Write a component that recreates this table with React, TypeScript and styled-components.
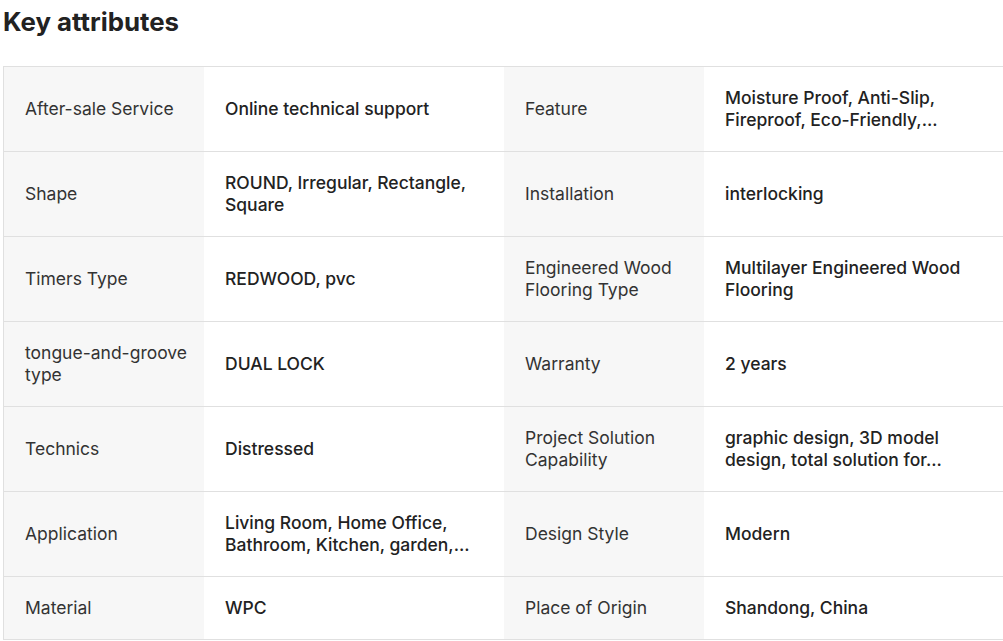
import React from "react";
import styled, { createGlobalStyle } from "styled-components";

const Global = createGlobalStyle`
  html, body { margin: 0; padding: 0; background: #fff; overflow: hidden; }
  body { font-family: Inter, "Noto Sans", "Liberation Sans", sans-serif; }
`;

const Page = styled.div`
  padding: 6px 0 0 3px;
  width: 1010px;
`;

const Title = styled.h2`
  margin: 0 0 28px 0;
  font-size: 25.8px;
  line-height: 32px;
  font-weight: 700;
  color: #222;
`;

const Table = styled.div`
  width: 1002px;
  border-top: 1px solid #e0e0e0;
  border-left: 1px solid #e0e0e0;
`;

const Row = styled.div`
  display: grid;
  grid-template-columns: 200px 300px 200px 1fr;
  border-bottom: 1px solid #e0e0e0;
`;

const Cell = styled.div<{ $label?: boolean }>`
  display: flex;
  align-items: center;
  padding: 20px 14px 20px 21px;
  font-size: 17.5px;
  line-height: 22px;
  background: ${(p) => (p.$label ? "#f7f7f7" : "#fff")};
  color: ${(p) => (p.$label ? "#333" : "#222")};
  font-weight: ${(p) => (p.$label ? 400 : 500)};
`;

const rows: [string, string, string, string][] = [
  ["After-sale Service", "Online technical support", "Feature", "Moisture Proof, Anti-Slip, Fireproof, Eco-Friendly,..."],
  ["Shape", "ROUND, Irregular, Rectangle, Square", "Installation", "interlocking"],
  ["Timers Type", "REDWOOD, pvc", "Engineered Wood Flooring Type", "Multilayer Engineered Wood Flooring"],
  ["tongue-and-groove type", "DUAL LOCK", "Warranty", "2 years"],
  ["Technics", "Distressed", "Project Solution Capability", "graphic design, 3D model design, total solution for..."],
  ["Application", "Living Room, Home Office, Bathroom, Kitchen, garden,...", "Design Style", "Modern"],
  ["Material", "WPC", "Place of Origin", "Shandong, China"],
];

export default function App() {
  return (
    <Page>
      <Global />
      <Title>Key attributes</Title>
      <Table>
        {rows.map((r, i) => (
          <Row key={i}>
            <Cell $label>{r[0]}</Cell>
            <Cell>{r[1]}</Cell>
            <Cell $label>{r[2]}</Cell>
            <Cell>{r[3]}</Cell>
          </Row>
        ))}
      </Table>
    </Page>
  );
}
